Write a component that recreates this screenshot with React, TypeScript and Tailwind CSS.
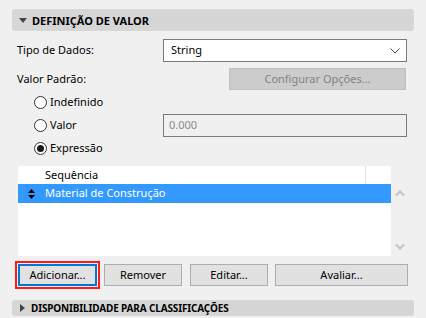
import React from "react";

function Radio({ checked }: { checked?: boolean }) {
  return (
    <span className="flex h-[13px] w-[13px] items-center justify-center rounded-full border border-[#333333] bg-white">
      {checked && <span className="h-[7px] w-[7px] rounded-full bg-[#1a1a1a]" />}
    </span>
  );
}

function Btn({ children, w }: { children: React.ReactNode; w: string }) {
  return (
    <div className={`flex h-[22px] items-center justify-center border border-[#adadad] bg-[#e1e1e1] text-black ${w}`}>
      {children}
    </div>
  );
}

export default function App() {
  return (
    <div
      className="h-[318px] w-[426px] overflow-hidden bg-[#f0f0f0] pt-[9px] pl-[12px] text-[11px] text-black"
      style={{ fontFamily: '"Noto Sans", "Open Sans", sans-serif' }}
    >
      {/* Header 1 */}
      <div className="flex h-[22px] w-[402px] items-center rounded-[3px] bg-[#d6d6d6] pl-[7px]">
        <svg width="8" height="5" viewBox="0 0 8 5" className="mr-[5px]">
          <polygon points="0,0 8,0 4,5" fill="#444" />
        </svg>
        <span className="font-bold leading-none">DEFINIÇÃO DE VALOR</span>
      </div>

      {/* Tipo de Dados */}
      <div className="mt-[8px] flex h-[23px] items-center">
        <span className="w-[151px] pl-[5px]">Tipo de Dados:</span>
        <div className="flex h-[23px] w-[244px] items-center justify-between border border-[#7a7a7a] bg-white pl-[7px] pr-[6px]">
          <span>String</span>
          <svg width="10" height="6" viewBox="0 0 10 6">
            <polyline points="0.5,0.5 5,5 9.5,0.5" fill="none" stroke="#444" strokeWidth="1" />
          </svg>
        </div>
      </div>

      {/* Valor Padrao */}
      <div className="mt-[6px] flex h-[22px] items-center">
        <span className="w-[217px] pl-[5px]">Valor Padrão:</span>
        <div className="flex h-[22px] w-[177px] items-center justify-center border border-[#bfbfbf] bg-[#cccccc] text-[#838383]">
          Configurar Opções...
        </div>
      </div>

      {/* Radios */}
      <div className="mt-[1px] flex h-[23px] items-center pl-[22px]">
        <Radio />
        <span className="ml-[3px]">Indefinido</span>
      </div>
      <div className="flex h-[23px] items-center">
        <div className="flex w-[151px] items-center pl-[22px]">
          <Radio />
          <span className="ml-[3px]">Valor</span>
        </div>
        <div className="flex h-[23px] w-[244px] items-center border border-[#7a7a7a] bg-[#f0f0f0] pl-[5px] text-[#8a8a8a]">
          0.000
        </div>
      </div>
      <div className="flex h-[23px] items-center pl-[22px]">
        <Radio checked />
        <span className="ml-[3px]">Expressão</span>
      </div>

      {/* List */}
      <div className="ml-[6px] mt-[6px] flex h-[90px] w-[390px]">
        <div className="flex w-[373px] flex-col bg-white">
          <div className="flex h-[18px] items-center">
            <span className="w-[27px]" />
            <span className="w-[320px]">Sequência</span>
            <span className="h-full w-[1px] bg-[#e3e3e3]" />
          </div>
          <div className="flex h-[19px] items-center bg-[#3399ff] text-white">
            <span className="flex w-[27px] justify-center">
              <svg width="7" height="10" viewBox="0 0 7 10">
                <polygon points="3.5,0 7,4 0,4" fill="#000" />
                <polygon points="0,6 7,6 3.5,10" fill="#000" />
              </svg>
            </span>
            <span>Material de Construção</span>
          </div>
        </div>
        <div className="flex flex-1 flex-col items-center justify-between pb-[6px] pt-[24px]">
          <svg width="10" height="6" viewBox="0 0 10 6">
            <polyline points="1,5.5 5,1.5 9,5.5" fill="none" stroke="#c2c2c2" strokeWidth="2" />
          </svg>
          <svg width="10" height="6" viewBox="0 0 10 6">
            <polyline points="1,0.5 5,4.5 9,0.5" fill="none" stroke="#c2c2c2" strokeWidth="2" />
          </svg>
        </div>
      </div>

      {/* Buttons */}
      <div className="mt-[5px] flex h-[28px] items-center">
        <div className="ml-[3px] flex h-[28px] w-[85px] items-center justify-center border-2 border-[#ff1a1a] p-[1px]">
          <div className="flex h-[22px] w-full items-center justify-center border-2 border-[#0078d7] bg-[#e1e1e1]">
            Adicionar...
          </div>
        </div>
        <div className="ml-[4px]">
          <Btn w="w-[78px]">Remover</Btn>
        </div>
        <div className="ml-[8px]">
          <Btn w="w-[78px]">Editar...</Btn>
        </div>
        <div className="ml-[7px]">
          <Btn w="w-[133px]">Avaliar...</Btn>
        </div>
      </div>

      {/* Header 2 */}
      <div className="mt-[11px] flex h-[16px] w-[402px] items-center rounded-[3px] bg-[#d6d6d6] pl-[8px]">
        <svg width="5" height="8" viewBox="0 0 5 8" className="mr-[6px]">
          <polygon points="0,0 5,4 0,8" fill="#444" />
        </svg>
        <span className="text-[10px] font-bold leading-none tracking-[-0.15px]">DISPONIBILIDADE PARA CLASSIFICAÇÕES</span>
      </div>
    </div>
  );
}
